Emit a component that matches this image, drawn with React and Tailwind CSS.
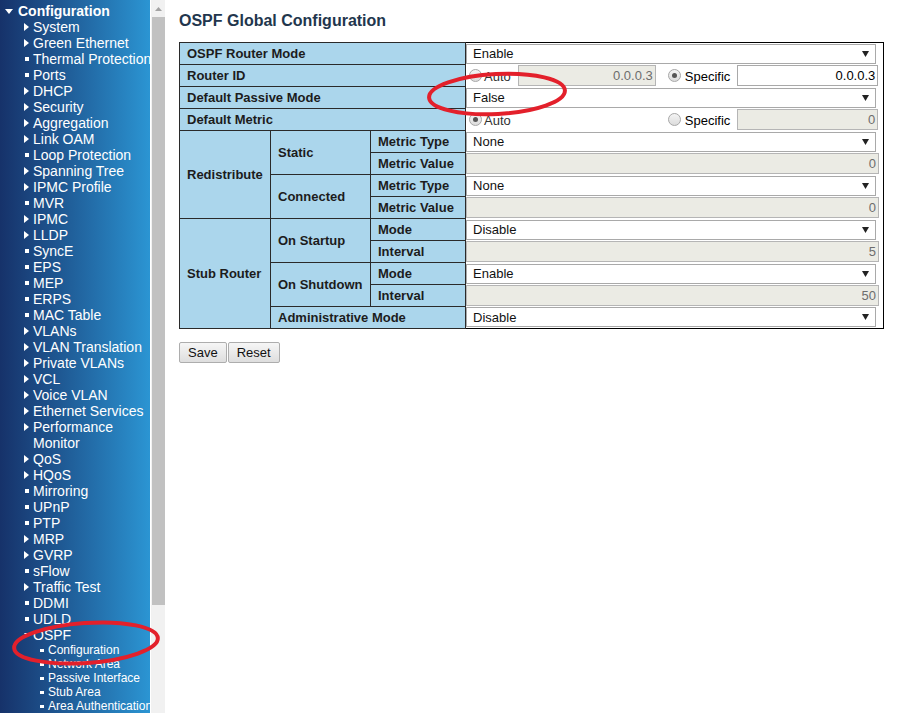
import React from "react";

const navItems = [
  ["System", "arrow"],
  ["Green Ethernet", "arrow"],
  ["Thermal Protection", "dot"],
  ["Ports", "dot"],
  ["DHCP", "arrow"],
  ["Security", "arrow"],
  ["Aggregation", "arrow"],
  ["Link OAM", "arrow"],
  ["Loop Protection", "dot"],
  ["Spanning Tree", "arrow"],
  ["IPMC Profile", "arrow"],
  ["MVR", "dot"],
  ["IPMC", "arrow"],
  ["LLDP", "arrow"],
  ["SyncE", "dot"],
  ["EPS", "dot"],
  ["MEP", "dot"],
  ["ERPS", "dot"],
  ["MAC Table", "dot"],
  ["VLANs", "arrow"],
  ["VLAN Translation", "arrow"],
  ["Private VLANs", "arrow"],
  ["VCL", "arrow"],
  ["Voice VLAN", "arrow"],
  ["Ethernet Services", "arrow"],
  ["Performance|Monitor", "arrow"],
  ["QoS", "arrow"],
  ["HQoS", "arrow"],
  ["Mirroring", "dot"],
  ["UPnP", "dot"],
  ["PTP", "dot"],
  ["MRP", "arrow"],
  ["GVRP", "arrow"],
  ["sFlow", "dot"],
  ["Traffic Test", "arrow"],
  ["DDMI", "dot"],
  ["UDLD", "dot"],
];

const ospfItems = ["Configuration", "Network Area", "Passive Interface", "Stub Area", "Area Authentication"];

const NavIcon = ({ kind }) =>
  kind === "arrow" ? (
    <svg width="5" height="8" viewBox="0 0 5 8" className="block">
      <polygon points="0,0 5,4 0,8" fill="white" />
    </svg>
  ) : (
    <span className="block w-[4px] h-[4px] bg-white ml-[1px]" />
  );

const NavItem = ({ label, kind }) => {
  const lines = label.split("|");
  return (
    <div className="flex pl-[24px] whitespace-nowrap">
      <span className="w-[9px] h-4 flex items-center shrink-0">
        <NavIcon kind={kind} />
      </span>
      <span className="leading-4">
        {lines.map((l, i) => (
          <div key={i}>{l}</div>
        ))}
      </span>
    </div>
  );
};

const Sidebar = () => (
  <div className="w-[150px] h-full overflow-hidden bg-gradient-to-r from-[#16326a] to-[#2b95d3] text-white text-[14px] pt-[3px]">
    <div className="flex items-center pl-[5px] h-4 font-bold whitespace-nowrap">
      <svg width="8" height="5" viewBox="0 0 8 5" className="mr-[5px]">
        <polygon points="0,0 8,0 4,5" fill="white" />
      </svg>
      Configuration
    </div>
    {navItems.map(([l, k]) => (
      <NavItem key={l} label={l} kind={k} />
    ))}
    <div className="flex items-center pl-[24px] h-4">
      <svg width="6" height="4" viewBox="0 0 6 4" className="mr-[3px]">
        <polygon points="0,0 6,0 3,4" fill="white" />
      </svg>
      OSPF
    </div>
    {ospfItems.map((l) => (
      <div key={l} className="flex items-center pl-[40px] h-[14px] text-[12px] whitespace-nowrap">
        <span className="w-[4px] h-[3px] bg-white mr-[4px] shrink-0" />
        {l}
      </div>
    ))}
  </div>
);

const Scrollbar = () => (
  <div className="w-[15px] h-full bg-[#f1f1f1] flex flex-col items-center border-l border-white">
    <div className="h-[17px] flex items-center justify-center">
      <svg width="7" height="4" viewBox="0 0 7 4">
        <polygon points="0,4 7,4 3.5,0" fill="#a3a3a3" />
      </svg>
    </div>
    <div className="w-[13px] h-[588px] bg-[#c1c1c1]" />
  </div>
);

const Select = ({ value }) => (
  <div className="w-[410px] h-[20px] border border-[#a9a9a9] bg-white flex items-center justify-between pl-[6px] pr-[6px] text-[#111]">
    <span>{value}</span>
    <svg width="7" height="6" viewBox="0 0 7 6">
      <polygon points="0,0 7,0 3.5,6" fill="#222" />
    </svg>
  </div>
);

const Disabled = ({ value, w = "w-[413px]" }) => (
  <div className={`${w} h-[21px] border border-[#b5b5b5] bg-[#ebebe4] text-[#6d6d6d] text-right pr-[2px] leading-[19px]`}>
    {value}
  </div>
);

const Radio = ({ checked }) => (
  <span className="w-[13px] h-[13px] rounded-full border border-[#a8a8a8] bg-gradient-to-b from-[#f4f4f4] to-[#dcdcdc] flex items-center justify-center shrink-0">
    {checked && <span className="w-[5px] h-[5px] rounded-full bg-[#555]" />}
  </span>
);

const RouterId = () => (
  <div className="flex items-center h-[21px]">
    <span className="ml-[3px]"><Radio /></span>
    <span className="ml-[2px] mt-[3px] text-[#333]">Auto</span>
    <span className="ml-[7px]"><Disabled value="0.0.0.3" w="w-[138px]" /></span>
    <span className="ml-[12px]"><Radio checked /></span>
    <span className="ml-[4px] mt-[3px]">Specific</span>
    <div className="ml-[7px] w-[141px] h-[21px] border border-[#a9a9a9] bg-white text-right pr-[2px] leading-[19px]">0.0.0.3</div>
  </div>
);

const DefaultMetric = () => (
  <div className="flex items-center h-[21px]">
    <span className="ml-[3px]"><Radio checked /></span>
    <span className="ml-[2px] mt-[3px] text-[#333]">Auto</span>
    <span className="ml-[157px]"><Radio /></span>
    <span className="ml-[4px] mt-[3px]">Specific</span>
    <span className="ml-[7px]"><Disabled value="0" w="w-[141px]" /></span>
  </div>
);

const lbl = "bg-[#abd6ec] border border-[#2a2a2a] font-bold text-left pl-[7px] py-0 text-[#1c1c1c]";
const val = "pl-0 py-0";

export default function App() {
  return (
    <div className="relative w-[911px] h-[713px] overflow-hidden bg-white flex" style={{ fontFamily: '"Liberation Sans", Arial, sans-serif' }}>
      <Sidebar />
      <Scrollbar />
      <main className="pl-[14px] pt-[11px]">
        <h1 className="text-[16px] font-bold leading-5 text-[#22364d] mb-[11px]">OSPF Global Configuration</h1>
        <table className="table-fixed border-collapse border border-black w-[705px] text-[13px]">
          <colgroup>
            <col className="w-[91px]" />
            <col className="w-[100px]" />
            <col className="w-[95px]" />
            <col />
          </colgroup>
          <tbody>
            <tr className="h-[22px]">
              <td colSpan={3} className={lbl}>OSPF Router Mode</td>
              <td className={val}><Select value="Enable" /></td>
            </tr>
            <tr className="h-[22px]">
              <td colSpan={3} className={lbl}>Router ID</td>
              <td className={val}><RouterId /></td>
            </tr>
            <tr className="h-[22px]">
              <td colSpan={3} className={lbl}>Default Passive Mode</td>
              <td className={val}><Select value="False" /></td>
            </tr>
            <tr className="h-[22px]">
              <td colSpan={3} className={lbl}>Default Metric</td>
              <td className={val}><DefaultMetric /></td>
            </tr>
            <tr className="h-[22px]">
              <td rowSpan={4} className={lbl}>Redistribute</td>
              <td rowSpan={2} className={lbl}>Static</td>
              <td className={lbl}>Metric Type</td>
              <td className={val}><Select value="None" /></td>
            </tr>
            <tr className="h-[22px]">
              <td className={lbl}>Metric Value</td>
              <td className={val}><Disabled value="0" /></td>
            </tr>
            <tr className="h-[22px]">
              <td rowSpan={2} className={lbl}>Connected</td>
              <td className={lbl}>Metric Type</td>
              <td className={val}><Select value="None" /></td>
            </tr>
            <tr className="h-[22px]">
              <td className={lbl}>Metric Value</td>
              <td className={val}><Disabled value="0" /></td>
            </tr>
            <tr className="h-[22px]">
              <td rowSpan={5} className={lbl}>Stub Router</td>
              <td rowSpan={2} className={lbl}>On Startup</td>
              <td className={lbl}>Mode</td>
              <td className={val}><Select value="Disable" /></td>
            </tr>
            <tr className="h-[22px]">
              <td className={lbl}>Interval</td>
              <td className={val}><Disabled value="5" /></td>
            </tr>
            <tr className="h-[22px]">
              <td rowSpan={2} className={lbl}>On Shutdown</td>
              <td className={lbl}>Mode</td>
              <td className={val}><Select value="Enable" /></td>
            </tr>
            <tr className="h-[22px]">
              <td className={lbl}>Interval</td>
              <td className={val}><Disabled value="50" /></td>
            </tr>
            <tr className="h-[22px]">
              <td colSpan={2} className={lbl}>Administrative Mode</td>
              <td className={val}><Select value="Disable" /></td>
            </tr>
          </tbody>
        </table>
        <div className="flex mt-[13px]">
          <button className="h-[21px] px-[8px] text-[13px] border border-[#adadad] rounded-[2px] bg-gradient-to-b from-[#f6f6f6] to-[#dedede] text-[#111]">Save</button>
          <button className="h-[21px] px-[8px] text-[13px] border border-[#adadad] rounded-[2px] bg-gradient-to-b from-[#f6f6f6] to-[#dedede] text-[#111] ml-[1px]">Reset</button>
        </div>
      </main>
      <svg className="absolute inset-0 pointer-events-none" width="911" height="713" viewBox="0 0 911 713">
        <ellipse cx="497" cy="94" rx="68" ry="20" fill="none" stroke="#e3202b" strokeWidth="4" transform="rotate(-3 497 94)" />
        <ellipse cx="86" cy="643" rx="72" ry="20" fill="none" stroke="#e3202b" strokeWidth="4" transform="rotate(-4 86 643)" />
      </svg>
    </div>
  );
}
